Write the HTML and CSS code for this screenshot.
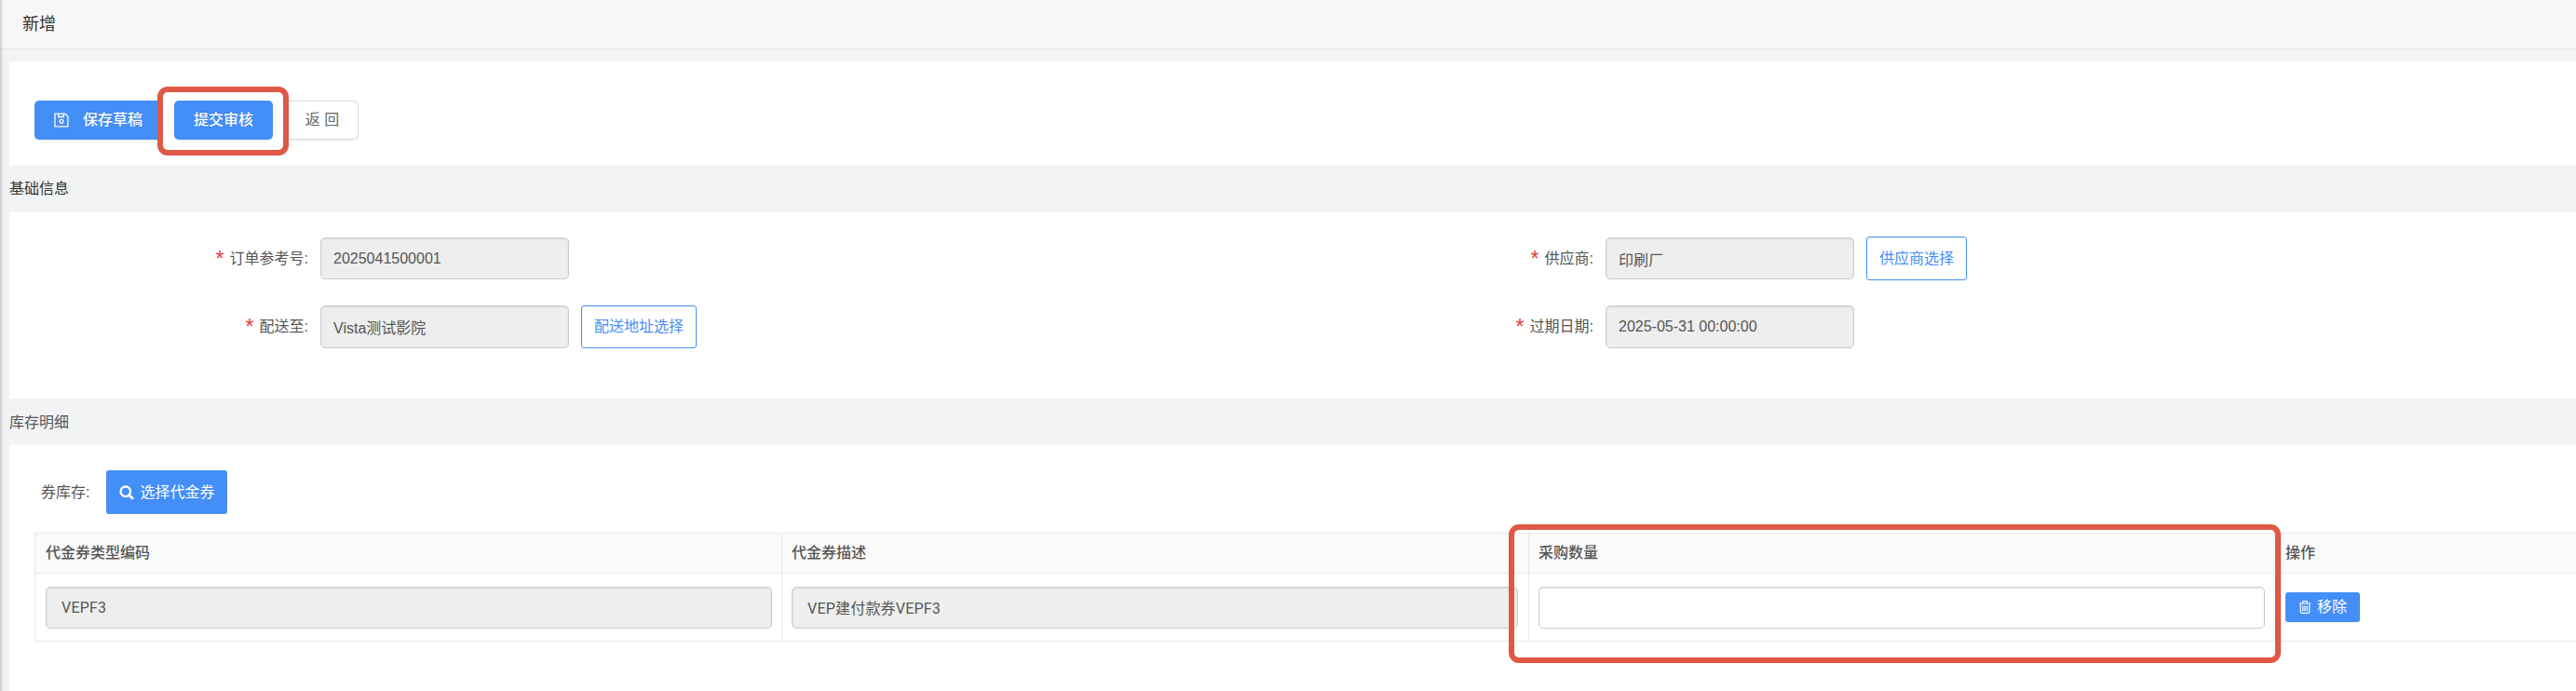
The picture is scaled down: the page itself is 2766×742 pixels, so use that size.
FILE: index.html
```html
<!DOCTYPE html>
<html lang="zh-CN">
<head>
  <meta charset="UTF-8">
  <meta name="viewport" content="width=device-width, initial-scale=1.0">
  <title>新增</title>
  <link rel="stylesheet" href="styles.css">
</head>
<body>

  <header class="page-header">新增</header>

  <main class="content">
    <section class="panel toolbar">
      <button class="btn btn-main btn-save">
        <svg class="icon-save" width="16" height="16" viewBox="0 0 16 16" fill="none" stroke="#fff" stroke-width="1.3">
          <path d="M1 1.2h11l2.9 2.9v10.7H1z"/>
          <path d="M4.8 1.2v3.3h5.6V1.2"/>
          <circle cx="8" cy="9.3" r="1.9"/>
        </svg>
        <span>保存草稿</span>
      </button>
      <div class="marked">
        <button class="btn btn-main">提交审核</button>
      </div>
      <button class="btn btn-back">返 回</button>
    </section>

    <h2 class="section-title dark">基础信息</h2>
    <section class="panel form">
      <div class="field">
        <label class="label required">订单参考号:</label>
        <input class="input short" type="text" value="2025041500001" disabled>
      </div>
      <div class="field">
        <label class="label required">供应商:</label>
        <input class="input short" type="text" value="印刷厂" disabled>
        <button class="btn-outline tall">供应商选择</button>
      </div>
      <div class="field">
        <label class="label required">配送至:</label>
        <input class="input" type="text" value="Vista测试影院" disabled>
        <button class="btn-outline">配送地址选择</button>
      </div>
      <div class="field">
        <label class="label required">过期日期:</label>
        <input class="input" type="text" value="2025-05-31 00:00:00" disabled>
      </div>
    </section>

    <h2 class="section-title">库存明细</h2>
    <section class="panel stock">
      <div class="stock-bar">
        <label>券库存:</label>
        <button class="btn-select">
          <svg width="16" height="16" viewBox="0 0 16 16" fill="none" stroke="#fff" stroke-width="2.3">
            <circle cx="6.8" cy="6.8" r="5.3"/>
            <path d="M10.7 10.7l3.4 3.4" stroke-width="2.8" stroke-linecap="round"/>
          </svg>
          <span>选择代金券</span>
        </button>
      </div>

      <table class="stock-table">
        <thead>
          <tr>
            <th>代金券类型编码</th>
            <th>代金券描述</th>
            <th class="qty"><div class="qty-mark"></div>采购数量</th>
            <th class="action">操作</th>
          </tr>
        </thead>
        <tbody>
          <tr>
            <td><input class="input cell" type="text" value="VEPF3" disabled></td>
            <td><input class="input cell" type="text" value="VEP建付款券VEPF3" disabled></td>
            <td><input class="input cell" type="text"></td>
            <td class="action">
              <button class="btn-remove">
                <svg width="14" height="16" viewBox="0 0 14 16" fill="none" stroke="#fff" stroke-width="1.2">
                  <path d="M.8 4h12.4M4.1 3.8L5 1.6h4l.9 2.2"/>
                  <path d="M2.2 4.2v8.6c0 .9.5 1.5 1.3 1.5h7c.8 0 1.3-.6 1.3-1.5V4.2"/>
                  <path d="M4.9 6.5v5.7M7 6.5v5.7M9.1 6.5v5.7"/>
                </svg>
                <span>移除</span>
              </button>
            </td>
          </tr>
        </tbody>
      </table>
    </section>
  </main>

</body>
</html>
```
FILE: styles.css
```css
*,
*::before,
*::after {
  box-sizing: border-box;
}

body {
  margin: 0;
  height: 742px;
  overflow: hidden;
  background: #f2f3f5;
  color: #555;
  font-family: "Liberation Sans", "Noto Sans CJK SC", sans-serif;
  font-size: 16px;
  line-height: 24px;
}

/* shadow of the side menu */
body::before {
  content: "";
  position: absolute;
  left: 0;
  top: 0;
  width: 4px;
  height: 742px;
  background: linear-gradient(to right, rgba(0, 0, 0, 0.16), rgba(0, 0, 0, 0));
}

button,
input {
  font: inherit;
  margin: 0;
}

button {
  display: flex;
  align-items: center;
  justify-content: center;
  white-space: nowrap;
  padding: 0;
  cursor: pointer;
}

.page-header {
  height: 53px;
  padding: 14px 24px 0;
  background: #f7f7f7;
  border-bottom: 1px solid #e8e8e8;
  color: #333;
  font-size: 18px;
}

.content {
  padding: 13px 0 0 10px;
}

.panel {
  background: #fff;
}

.section-title {
  position: relative;
  margin: -4px 0 0;
  height: 50px;
  padding-top: 14px;
  border-top-left-radius: 4px;
  background: #f2f3f5;
  font-size: 16px;
  font-weight: 400;
}

.section-title.dark {
  height: 51px;
  color: #333;
}

/* toolbar */
.toolbar {
  display: flex;
  height: 115px;
  padding: 42px 27px 0;
}

.btn {
  height: 42px;
  border-radius: 5px;
  box-shadow: 0 2px 0 rgba(0, 0, 0, 0.04);
}

.btn-main {
  width: 106px;
  border: none;
  background: #448ef7;
  color: #fff;
  font-weight: 500;
  text-shadow: 0 -1px 0 rgba(0, 0, 0, 0.12);
}

.btn-save {
  width: 137px;
  gap: 15px;
}

.btn-back {
  width: 78px;
  border: 1px solid #d9d9d9;
  background: #fff;
  color: #666;
}

.marked {
  position: relative;
  margin: 0 14px 0 13px;
}

.marked::after {
  content: "";
  position: absolute;
  left: -18px;
  top: -15px;
  width: 141px;
  height: 74px;
  border: 6px solid #df5846;
  border-radius: 11px;
  pointer-events: none;
  z-index: 1;
}

/* base info */
.form {
  display: grid;
  grid-template-columns: 1380px 1fr;
  grid-template-rows: 47px 46px;
  row-gap: 27px;
  height: 204px;
  padding-top: 26px;
}

.field {
  display: flex;
  align-items: center;
}

.label {
  width: 321px;
  margin-right: 13px;
  text-align: right;
}

.required::before {
  content: "*";
  margin-right: 6px;
  color: #e8403a;
  font-size: 23px;
  line-height: 16px;
  vertical-align: -3px;
}

.input {
  width: 267px;
  height: 46px;
  padding: 0 13px;
  border: 1px solid #ccc;
  border-radius: 5px;
  background: #fff;
  color: #555;
  box-shadow: inset 0 1px 2px rgba(0, 0, 0, 0.09);
}

.input.short {
  height: 45px;
}

.input:disabled {
  background: #eee;
}

.btn-outline {
  height: 46px;
  margin-left: 13px;
  padding: 0 13px;
  border: 1px solid #448ef7;
  border-radius: 3px;
  background: #fff;
  color: #448ef7;
}

.btn-outline.tall {
  height: 47px;
}

/* stock detail */
.stock {
  height: 264px;
  padding: 27px 0 0 27px;
}

.stock-bar {
  display: flex;
  align-items: center;
  gap: 18px;
  height: 47px;
  padding-left: 7px;
  margin-bottom: 20px;
}

.btn-select {
  width: 130px;
  height: 47px;
  gap: 6px;
  border: none;
  border-radius: 3px;
  background: #448ef7;
  color: #fff;
}

.stock-table {
  width: 2729px;
  table-layout: fixed;
  border-collapse: separate;
  border-spacing: 0;
  border-top: 1px solid #e8e8e8;
  border-left: 1px solid #e8e8e8;
}

.stock-table th,
.stock-table td {
  width: 802px;
  padding: 0 10px;
  border-right: 1px solid #e8e8e8;
  border-bottom: 1px solid #e8e8e8;
  text-align: left;
}

.stock-table th {
  height: 43px;
  background: #fafafa;
  font-weight: 500;
}

.stock-table td {
  height: 73px;
}

.stock-table th:first-child,
.stock-table td:first-child {
  padding-left: 11px;
}

.stock-table .qty {
  position: relative;
  width: 801px;
}

.stock-table .action {
  width: auto;
  padding-left: 11px;
  border-right: none;
}

.input.cell {
  display: block;
  width: 780px;
  height: 45px;
  padding: 0 16px;
  font-family: Roboto, "Noto Sans CJK SC", sans-serif;
  letter-spacing: 0.2px;
}

.qty-mark {
  position: absolute;
  left: -22px;
  top: -10px;
  width: 829px;
  height: 149px;
  border: 6px solid #df5846;
  border-radius: 11px;
  pointer-events: none;
  z-index: 1;
}

.btn-remove {
  width: 80px;
  height: 32px;
  gap: 6px;
  border: none;
  border-radius: 3px;
  background: #448ef7;
  color: #fff;
}
```
